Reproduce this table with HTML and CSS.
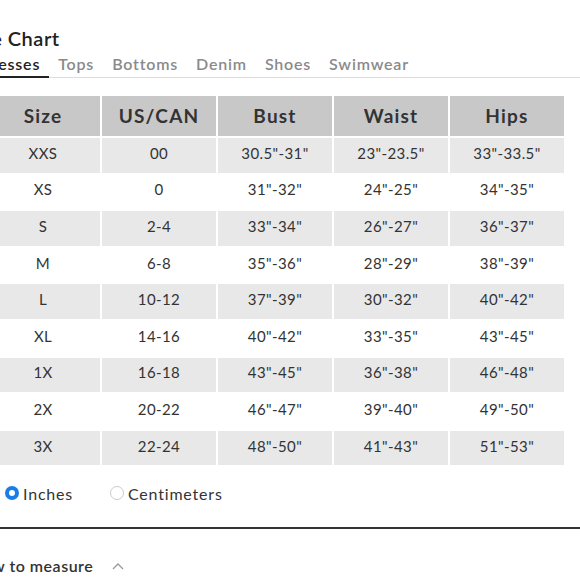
FILE: index.html
```html
<!DOCTYPE html>
<html>
<head>
<meta charset="utf-8">
<link rel="stylesheet" href="styles.css">
</head>
<body>
<div class="page">
  <h1 class="title">Size Chart</h1>
  <div class="tabs">
    <span class="tab active">Dresses</span>
    <span class="tab">Tops</span>
    <span class="tab">Bottoms</span>
    <span class="tab">Denim</span>
    <span class="tab">Shoes</span>
    <span class="tab">Swimwear</span>
  </div>
  <table class="chart">
    <thead>
      <tr><th>Size</th><th>US/CAN</th><th>Bust</th><th>Waist</th><th>Hips</th></tr>
    </thead>
    <tbody>
      <tr class="alt"><td>XXS</td><td>00</td><td>30.5"-31"</td><td>23"-23.5"</td><td>33"-33.5"</td></tr>
      <tr><td>XS</td><td>0</td><td>31"-32"</td><td>24"-25"</td><td>34"-35"</td></tr>
      <tr class="alt"><td>S</td><td>2-4</td><td>33"-34"</td><td>26"-27"</td><td>36"-37"</td></tr>
      <tr><td>M</td><td>6-8</td><td>35"-36"</td><td>28"-29"</td><td>38"-39"</td></tr>
      <tr class="alt"><td>L</td><td>10-12</td><td>37"-39"</td><td>30"-32"</td><td>40"-42"</td></tr>
      <tr><td>XL</td><td>14-16</td><td>40"-42"</td><td>33"-35"</td><td>43"-45"</td></tr>
      <tr class="alt"><td>1X</td><td>16-18</td><td>43"-45"</td><td>36"-38"</td><td>46"-48"</td></tr>
      <tr><td>2X</td><td>20-22</td><td>46"-47"</td><td>39"-40"</td><td>49"-50"</td></tr>
      <tr class="alt"><td>3X</td><td>22-24</td><td>48"-50"</td><td>41"-43"</td><td>51"-53"</td></tr>
    </tbody>
  </table>
  <div class="units">
    <label class="unit"><span class="radio on"></span>Inches</label>
    <label class="unit"><span class="radio"></span>Centimeters</label>
  </div>
  <div class="measure">
    <span>How to measure</span>
    <svg class="chev" width="12" height="8" viewBox="0 0 12 8"><path d="M1 7 L6 2 L11 7" fill="none" stroke="#999" stroke-width="1.3"/></svg>
  </div>
</div>
</body>
</html>
```

FILE: styles.css
```css
html, body {
  margin: 0;
  padding: 0;
  background: #fff;
  overflow: hidden;
}
body {
  font-family: "Lato", "Liberation Sans", sans-serif;
  color: #333;
}
.page {
  width: 640px;
  margin-left: -30px;
  padding-top: 26px;
}
.title {
  margin: 0 0 0 -5px;
  font-size: 20px;
  font-weight: 600;
  letter-spacing: 0.5px;
  color: #222;
  line-height: 24px;
}
.tabs {
  display: flex;
  margin-top: 4px;
  border-bottom: 1px solid #ddd;
}
.tab {
  font-size: 16px;
  font-weight: 600;
  letter-spacing: 0.8px;
  color: #8a8a8a;
  padding: 1px 9px 4px;
  line-height: 18px;
}
.tab.active {
  color: #222;
  border-bottom: 2px solid #222;
  padding-bottom: 2px;
  margin-bottom: -1px;
}
.chart {
  margin-top: 16px;
  margin-left: 14px;
  border-collapse: separate;
  border-spacing: 2px;
  text-align: center;
}
.chart th {
  width: 114px;
  height: 38px;
  padding: 0 0 2px;
  background: #c8c8c8;
  font-size: 19px;
  font-weight: 700;
  letter-spacing: 1.2px;
  color: #333;
}
.chart td {
  height: 29.6px;
  padding: 0 0 5px;
  font-size: 15px;
  letter-spacing: 0.4px;
  color: #333;
}
.chart tr.alt td {
  background: #e8e8e8;
}
.units {
  display: flex;
  margin-top: 16px;
  padding-left: 35px;
  height: 20px;
  align-items: center;
}
.unit {
  display: flex;
  align-items: center;
  font-size: 16px;
  letter-spacing: 0.8px;
  color: #333;
  margin-right: 37px;
}
.radio {
  width: 14px;
  height: 14px;
  border-radius: 50%;
  border: 1px solid #ccc;
  margin-right: 4px;
  box-sizing: border-box;
}
.radio.on {
  border: 4px solid #1a7de6;
  background: #fff;
}
.measure {
  border-top: 2px solid #333;
  margin-top: 24px;
  padding-top: 27px;
  display: flex;
  align-items: center;
  font-size: 16px;
  font-weight: 600;
  letter-spacing: 0.5px;
  color: #333;
}
.chev {
  margin-left: 19px;
}
```
